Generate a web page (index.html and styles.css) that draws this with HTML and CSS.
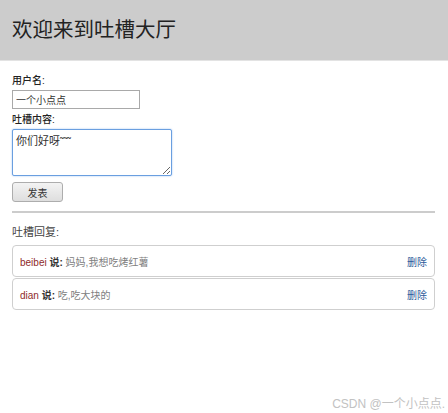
FILE: index.html
```html
<!DOCTYPE html>
<html lang="zh">
<head>
  <meta charset="UTF-8">
  <title>吐槽大厅</title>
  <link rel="stylesheet" href="styles.css">
</head>
<body>

  <!-- 顶部标题 -->
  <div class="header">
    <h1>欢迎来到吐槽大厅</h1>
  </div>

  <div class="main">
    <!-- 发表吐槽 -->
    <form class="post-form">
      <label class="label">用户名:</label>
      <input type="text" class="name-input" value="一个小点点">
      <label class="label">吐槽内容:</label>
      <textarea class="content-input">你们好呀˜˜˜</textarea>
      <button type="button" class="post-btn">发表</button>
    </form>

    <hr class="line">

    <!-- 回复列表 -->
    <p class="reply-title">吐槽回复:</p>
    <ul class="reply-list">
      <li class="reply">
        <span><span class="user">beibei</span> <b>说:</b> <span class="msg">妈妈,我想吃烤红薯</span></span>
        <a href="#" class="del">删除</a>
      </li>
      <li class="reply">
        <span><span class="user">dian</span> <b>说:</b> <span class="msg">吃,吃大块的</span></span>
        <a href="#" class="del">删除</a>
      </li>
    </ul>
  </div>

  <div class="watermark">CSDN @一个小点点.</div>

</body>
</html>
```

FILE: styles.css
```css
body {
  font-family: "Liberation Sans", "Noto Sans CJK SC", sans-serif;
  margin: 0;
  padding: 0;
  color: #333;
  background-color: #fff;
  position: relative;
  min-height: 413px;
}

.header {
  height: 60px;
  background-color: #cccccc;
  border-bottom: 1px solid #e3e3e3;
  padding-left: 12px;
}

.header h1 {
  margin: 0;
  font-size: 20.5px;
  font-weight: normal;
  line-height: 60px;
  color: #222;
}

.main {
  padding: 0 13px 0 12px;
}

.post-form {
  display: flex;
  flex-direction: column;
  align-items: flex-start;
  padding-top: 13px;
}

.label {
  font-size: 10px;
  line-height: 14px;
  font-weight: 500;
  color: #222;
}

.name-input {
  box-sizing: border-box;
  width: 128px;
  height: 19px;
  margin: 2px 0 4px 0;
  padding: 0 3px;
  font-family: inherit;
  font-size: 10px;
  color: #333;
  border: 1px solid #a9a9a9;
  border-radius: 0;
}

.content-input {
  box-sizing: border-box;
  width: 160px;
  height: 47px;
  margin: 2px 0 6px 0;
  padding: 2px 3px;
  font-family: inherit;
  font-size: 11px;
  color: #333;
  border: 1px solid #6a9fe0;
  border-radius: 2px;
  box-shadow: 0 0 2px #9ec3f0;
  outline: none;
}

.post-btn {
  box-sizing: border-box;
  width: 51px;
  height: 20px;
  padding: 0;
  font-family: inherit;
  font-size: 10px;
  color: #333;
  background: linear-gradient(#f3f3f3, #dedede);
  border: 1px solid #adadad;
  border-radius: 3px;
}

.line {
  border: none;
  border-top: 2px solid #cccccc;
  margin: 9px 0 0 0;
}

.reply-title {
  margin: 11px 0 0 0;
  font-size: 11px;
  line-height: 16px;
  color: #444;
}

.reply-list {
  list-style: none;
  margin: 5px 0 0 0;
  padding: 0;
}

.reply {
  box-sizing: border-box;
  height: 32px;
  margin-bottom: 1px;
  padding: 0 7px;
  display: flex;
  align-items: center;
  justify-content: space-between;
  border: 1px solid #cfcfcf;
  border-radius: 4px;
  font-size: 10px;
}

.reply .user {
  color: #8e2a2a;
}

.reply b {
  color: #333;
}

.reply .msg {
  color: #808080;
}

.del {
  color: #2d5a9a;
  text-decoration: none;
}

.watermark {
  position: absolute;
  right: 3px;
  bottom: 2px;
  font-size: 12px;
  color: #c2c2c2;
}
```
